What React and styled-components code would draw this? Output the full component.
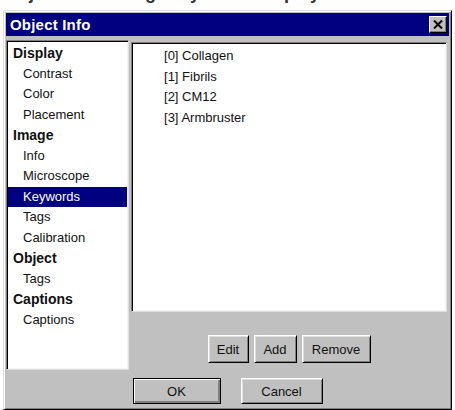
import styled, { createGlobalStyle } from 'styled-components';

const GlobalStyle = createGlobalStyle`
  html, body {
    margin: 0;
    padding: 0;
    background: #ffffff;
    overflow: hidden;
  }
  body {
    font-family: "Liberation Sans", Arial, sans-serif;
    font-size: 13px;
    color: #111;
  }
`;

// strip of a heading that sits above the dialog, mostly scrolled off
const Caption = styled.div`
  height: 10px;
  overflow: hidden;
  padding-left: 4px;
  font-weight: bold;
  font-size: 18px;
  color: #333;
  line-height: 10px;
  & > span {
    display: block;
    margin-top: -12px;
  }
`;

const Window = styled.div`
  box-sizing: border-box;
  margin: 0 3px;
  height: 400px;
  background: #c0c0c0;
  border: 1px solid;
  border-color: #dfdfdf #000 #000 #dfdfdf;
  box-shadow: inset 1px 1px 0 #fff, inset -1px -1px 0 #808080;
  padding: 2px;
  display: flex;
  flex-direction: column;
`;

const TitleBar = styled.div`
  height: 23px;
  flex-shrink: 0;
  background: #000080;
  display: flex;
  align-items: center;
  justify-content: space-between;
  padding: 0 2px 0 4px;
`;

const Title = styled.span`
  color: #fff;
  font-weight: bold;
  font-size: 15px;
  letter-spacing: 0.2px;
`;

const CloseButton = styled.button`
  width: 18px;
  height: 17px;
  padding: 0;
  background: #c0c0c0;
  border: 1px solid;
  border-color: #fff #000 #000 #fff;
  box-shadow: inset -1px -1px 0 #808080;
  display: flex;
  align-items: center;
  justify-content: center;
`;

const Body = styled.div`
  flex: 1;
  display: flex;
  flex-direction: column;
  padding-top: 4px;
`;

const Main = styled.div`
  display: grid;
  grid-template-columns: 123px 1fr;
  column-gap: 2px;
  height: 330px;
`;

const ListBox = styled.div`
  box-sizing: border-box;
  background: #fff;
  border: 1px solid;
  border-color: #808080 #dfdfdf #dfdfdf #808080;
  box-shadow: inset 1px 1px 0 #000, inset -1px -1px 0 #f4f4f4;
  padding: ${p => p.$pad || '2px 1px'};
  height: ${p => p.$h || 'auto'};
  overflow: hidden;
`;

const TreeItem = styled.div`
  height: 20.5px;
  line-height: 20.5px;
  padding-left: ${p => (p.$head ? '5px' : '15px')};
  font-weight: ${p => (p.$head ? 'bold' : 'normal')};
  font-size: ${p => (p.$head ? '14px' : '13px')};
  color: ${p => (p.$selected ? '#fff' : '#111')};
  background: ${p => (p.$selected ? '#000080' : 'transparent')};
  white-space: nowrap;
`;

const RightColumn = styled.div`
  display: flex;
  flex-direction: column;
  padding-top: 2px;
  padding-right: 2px;
`;

const KeywordItem = styled.div`
  height: 20.5px;
  line-height: 20.5px;
  padding-left: 31px;
`;

const ButtonRow = styled.div`
  display: flex;
  justify-content: center;
  gap: ${p => p.$gap || '5px'};
  margin-top: ${p => p.$top || '0'};
`;

const Button = styled.button`
  width: ${p => p.$w}px;
  height: ${p => p.$h || 28}px;
  padding: 0;
  font-family: "Liberation Sans", Arial, sans-serif;
  font-size: 13px;
  color: #111;
  background: #c0c0c0;
  border: 1px solid;
  border-color: ${p => (p.$default ? '#000' : '#fff #000 #000 #fff')};
  box-shadow: ${p =>
    p.$default
      ? 'inset 1px 1px 0 #fff, inset -2px -2px 0 #808080'
      : 'inset 1px 1px 0 #dfdfdf, inset -1px -1px 0 #808080'};
`;

const tree = [
  { label: 'Display', head: true },
  { label: 'Contrast' },
  { label: 'Color' },
  { label: 'Placement' },
  { label: 'Image', head: true },
  { label: 'Info' },
  { label: 'Microscope' },
  { label: 'Keywords', selected: true },
  { label: 'Tags' },
  { label: 'Calibration' },
  { label: 'Object', head: true },
  { label: 'Tags' },
  { label: 'Captions', head: true },
  { label: 'Captions' },
];

const keywords = ['Collagen', 'Fibrils', 'CM12', 'Armbruster'];

export default function App() {
  return (
    <>
      <GlobalStyle />
      <Caption>
        <span>Object Info dialog: Keywords display</span>
      </Caption>
      <Window>
        <TitleBar>
          <Title>Object Info</Title>
          <CloseButton aria-label="Close">
            <svg width="10" height="9" viewBox="0 0 10 9">
              <path d="M1 0.5 L9 8.5 M9 0.5 L1 8.5" stroke="#000" strokeWidth="2" />
            </svg>
          </CloseButton>
        </TitleBar>
        <Body>
          <Main>
            <ListBox>
              {tree.map((t, i) => (
                <TreeItem key={i} $head={t.head} $selected={t.selected}>
                  {t.label}
                </TreeItem>
              ))}
            </ListBox>
            <RightColumn>
              <ListBox $pad="3px 1px" $h="270px">
                {keywords.map((k, i) => (
                  <KeywordItem key={k}>[{i}] {k}</KeywordItem>
                ))}
              </ListBox>
              <ButtonRow $top="23px">
                <Button $w={41}>Edit</Button>
                <Button $w={43}>Add</Button>
                <Button $w={69}>Remove</Button>
              </ButtonRow>
            </RightColumn>
          </Main>
          <ButtonRow $gap="20px" $top="8px">
            <Button $w={88} $h={26} $default>OK</Button>
            <Button $w={82} $h={26}>Cancel</Button>
          </ButtonRow>
        </Body>
      </Window>
    </>
  );
}
